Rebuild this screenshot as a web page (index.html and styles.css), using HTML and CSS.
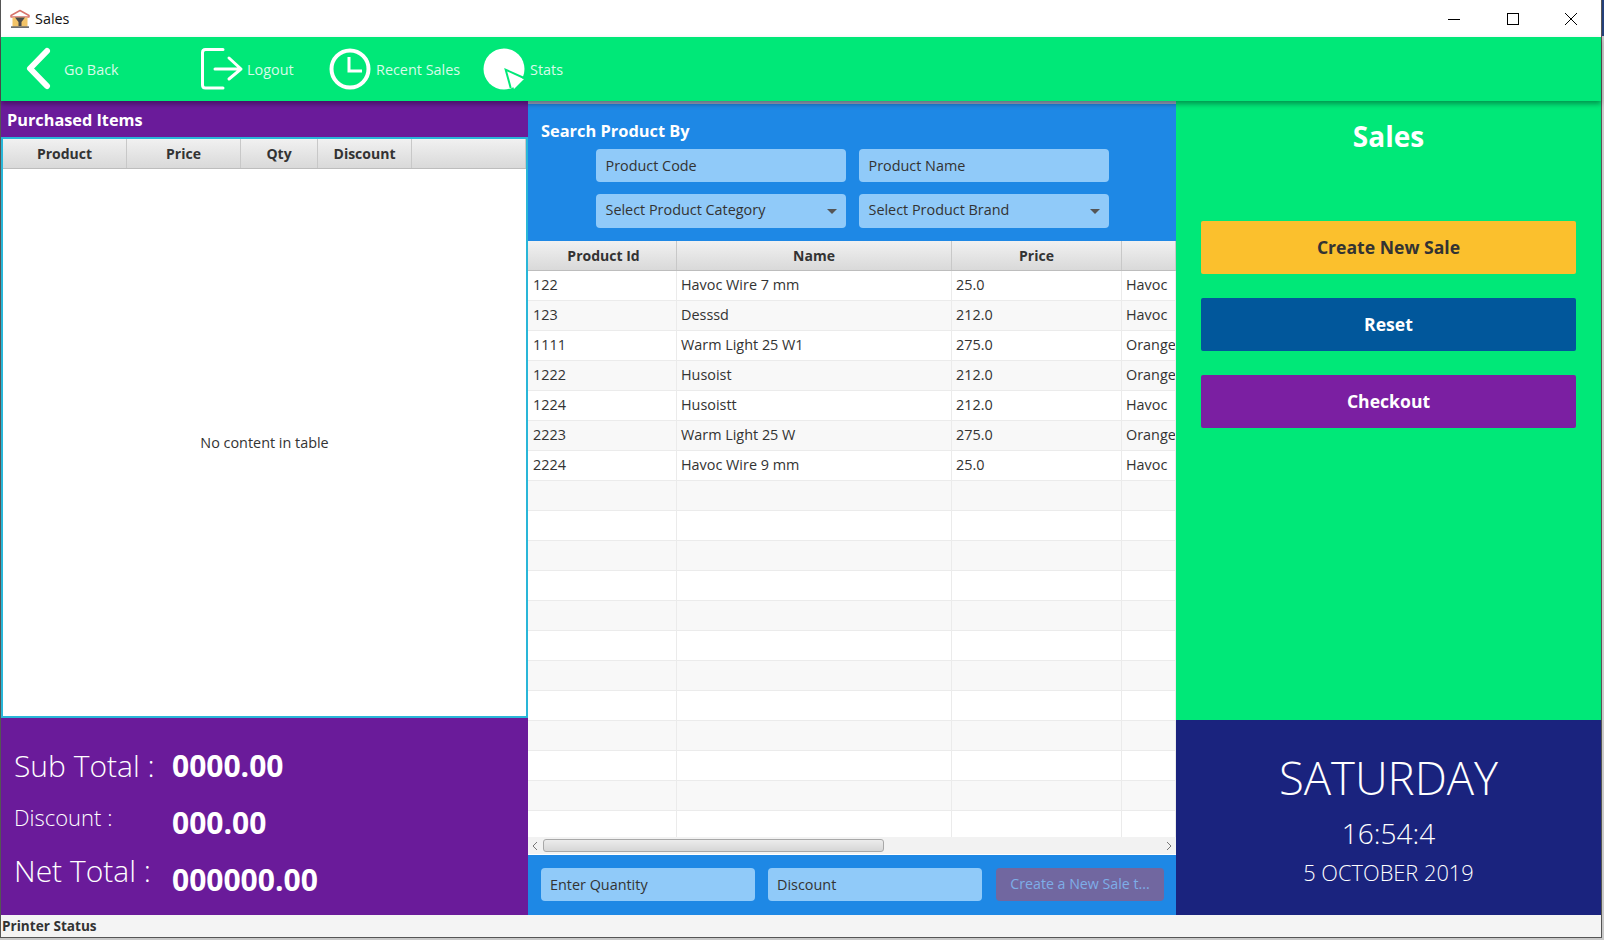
FILE: index.html
```html
<!DOCTYPE html>
<html lang="en-US">
<head>
    <meta charset="UTF-8">
    <meta name="viewport" content="width=device-width, initial-scale=1.0">
    <title>Sales</title>
    <link rel="stylesheet" href="styles.css">
</head>
<body>
    <div class="window">
        <div class="titlebar">
            <svg class="app-icon" width="20" height="20" viewBox="0 0 20 20">
                <path d="M1 6.5 L10 1.5 L19 6.5 V8 H1 Z" fill="#fff" stroke="#d8736c" stroke-width="1.5" stroke-linejoin="round"/>
                <rect x="2.5" y="8.5" width="15" height="9" fill="#f3c468"/>
                <path d="M5 8.5 H15 L11.5 13 V17 H8.5 V13 Z" fill="#4a4a4a"/>
                <rect x="1" y="17.5" width="18" height="1.2" fill="#333"/>
            </svg>
            <span class="title-text">Sales</span>
            <div class="win-controls">
                <svg width="14" height="14" viewBox="0 0 14 14"><path d="M1 7.5 H13" stroke="#000" fill="none"/></svg>
                <svg width="14" height="14" viewBox="0 0 14 14"><rect x="1.5" y="1.5" width="11" height="11" stroke="#000" fill="none"/></svg>
                <svg width="14" height="14" viewBox="0 0 14 14"><path d="M1 1 L13 13 M13 1 L1 13" stroke="#000" fill="none"/></svg>
            </div>
        </div>

        <div class="toolbar">
            <div class="tool tool-back">
                <svg width="30" height="44" viewBox="0 0 30 44"><path d="M25 4 L8 21.5 L25 39" stroke="#fff" stroke-width="6" stroke-linecap="round" stroke-linejoin="round" fill="none"/></svg>
                <span>Go Back</span>
            </div>
            <div class="tool tool-logout">
                <svg width="44" height="44" viewBox="0 0 44 44" fill="none" stroke="#fff" stroke-width="3" stroke-linecap="round" stroke-linejoin="round"><path d="M23 2.5 H5.5 Q2.5 2.5 2.5 5.5 V38 Q2.5 41 5.5 41 H23"/><path d="M15 22 H41 M29 11 L41 22 L29 32"/></svg>
                <span>Logout</span>
            </div>
            <div class="tool tool-recent">
                <svg width="42" height="42" viewBox="0 0 42 42" fill="none" stroke="#fff"><circle cx="21" cy="21" r="18.5" stroke-width="4"/><path d="M20 9 V23 H33" stroke-width="3"/></svg>
                <span>Recent Sales</span>
            </div>
            <div class="tool tool-stats">
                <svg width="42" height="42" viewBox="0 0 42 42">
                    <circle cx="21" cy="21" r="20.5" fill="#fff"/>
                    <path d="M25 25 L41 31 L31 41 Z" fill="#fff"/>
                    <path d="M41 30 L22.7 21.7 L27.7 40" stroke="#00e878" stroke-width="2" fill="none"/>
                </svg>
                <span>Stats</span>
            </div>
        </div>

        <div class="main">
            <div class="left-col">
                <div class="left-head">Purchased Items</div>
                <div class="cart-table">
                    <div class="table-head cart-cols">
                        <div>Product</div>
                        <div>Price</div>
                        <div>Qty</div>
                        <div>Discount</div>
                        <div></div>
                    </div>
                    <div class="cart-empty">No content in table</div>
                </div>
                <div class="totals">
                    <div class="total-row">
                        <span class="total-label big">Sub Total :</span>
                        <span class="total-value">0000.00</span>
                    </div>
                    <div class="total-row">
                        <span class="total-label small">Discount :</span>
                        <span class="total-value">000.00</span>
                    </div>
                    <div class="total-row">
                        <span class="total-label big net">Net Total :</span>
                        <span class="total-value">000000.00</span>
                    </div>
                </div>
            </div>

            <div class="mid-col">
                <div class="search-panel">
                    <div class="search-title">Search Product By</div>
                    <div class="search-grid">
                        <div class="field">Product Code</div>
                        <div class="field">Product Name</div>
                        <div class="field select">Select Product Category</div>
                        <div class="field select">Select Product Brand</div>
                    </div>
                </div>
                <div class="product-table">
                    <div class="table-head product-cols">
                        <div class="head-id">Product Id</div>
                        <div>Name</div>
                        <div>Price</div>
                        <div></div>
                    </div>
                    <div class="row product-cols"><div>122</div><div>Havoc Wire 7 mm</div><div>25.0</div><div>Havoc</div></div>
                    <div class="row product-cols"><div>123</div><div>Desssd</div><div>212.0</div><div>Havoc</div></div>
                    <div class="row product-cols"><div>1111</div><div>Warm Light 25 W1</div><div>275.0</div><div>Orange</div></div>
                    <div class="row product-cols"><div>1222</div><div>Husoist</div><div>212.0</div><div>Orange</div></div>
                    <div class="row product-cols"><div>1224</div><div>Husoistt</div><div>212.0</div><div>Havoc</div></div>
                    <div class="row product-cols"><div>2223</div><div>Warm Light 25 W</div><div>275.0</div><div>Orange</div></div>
                    <div class="row product-cols"><div>2224</div><div>Havoc Wire 9 mm</div><div>25.0</div><div>Havoc</div></div>
                    <div class="row product-cols"><div></div><div></div><div></div><div></div></div>
                    <div class="row product-cols"><div></div><div></div><div></div><div></div></div>
                    <div class="row product-cols"><div></div><div></div><div></div><div></div></div>
                    <div class="row product-cols"><div></div><div></div><div></div><div></div></div>
                    <div class="row product-cols"><div></div><div></div><div></div><div></div></div>
                    <div class="row product-cols"><div></div><div></div><div></div><div></div></div>
                    <div class="row product-cols"><div></div><div></div><div></div><div></div></div>
                    <div class="row product-cols"><div></div><div></div><div></div><div></div></div>
                    <div class="row product-cols"><div></div><div></div><div></div><div></div></div>
                    <div class="row product-cols"><div></div><div></div><div></div><div></div></div>
                    <div class="row product-cols"><div></div><div></div><div></div><div></div></div>
                    <div class="row row-last product-cols"><div></div><div></div><div></div><div></div></div>
                    <div class="hscroll">
                        <svg width="8" height="10" viewBox="0 0 8 10"><path d="M6 1 L2 5 L6 9" stroke="#777" fill="none"/></svg>
                        <div class="hscroll-track"><div class="hscroll-thumb"></div></div>
                        <svg width="8" height="10" viewBox="0 0 8 10"><path d="M2 1 L6 5 L2 9" stroke="#777" fill="none"/></svg>
                    </div>
                </div>
                <div class="qty-panel">
                    <div class="field qty-field">Enter Quantity</div>
                    <div class="field qty-field">Discount</div>
                    <div class="add-btn">Create a New Sale t...</div>
                </div>
            </div>

            <div class="right-col">
                <div class="actions">
                    <div class="sales-title">Sales</div>
                    <div class="btn btn-yellow">Create New Sale</div>
                    <div class="btn btn-blue">Reset</div>
                    <div class="btn btn-purple">Checkout</div>
                </div>
                <div class="clock">
                    <div class="clock-day">SATURDAY</div>
                    <div class="clock-time">16:54:4</div>
                    <div class="clock-date">5 OCTOBER 2019</div>
                </div>
            </div>
        </div>

        <div class="statusbar">Printer Status</div>
    </div>
</body>
</html>
```

FILE: styles.css
```css
* {
    padding: 0;
    margin: 0;
    box-sizing: border-box;
}
html, body {
    height: 100%;
    overflow: hidden;
}
body {
    font-family: "Open Sans", "Noto Sans", Arial, sans-serif;
    background: linear-gradient(#24407a 36px, #c9c9c9 36px);
    color: #333;
}
.window {
    width: 1602px;
    height: 938px;
    background-color: #f4f4f4;
    border-left: 1px solid #555;
    border-right: 1px solid #555;
    border-bottom: 1px solid #555;
    display: flex;
    flex-direction: column;
}
.titlebar {
    height: 37px;
    background-color: #fff;
    display: flex;
    align-items: center;
    padding-left: 9px;
    flex-shrink: 0;
}
.app-icon {
    margin-right: 5px;
}
.title-text {
    font-size: 14.4px;
    color: #111;
}
.win-controls {
    margin-left: auto;
    display: flex;
    gap: 44.5px;
    padding-right: 23px;
}
.toolbar {
    height: 64px;
    background-color: #00e878;
    box-shadow: 0 3px 5px rgba(0, 0, 0, 0.35);
    display: flex;
    align-items: center;
    position: relative;
    flex-shrink: 0;
    color: #fff;
    font-size: 14.4px;
}
.tool {
    display: flex;
    align-items: center;
}
.tool span {
    color: #d8fbe9;
}
.tool-back {
    width: 199px;
    padding-left: 21px;
    gap: 12px;
}
.tool-logout {
    width: 129px;
    gap: 3px;
}
.tool-recent {
    width: 154px;
    gap: 5px;
}
.tool-stats {
    gap: 5px;
}
.main {
    flex: 1;
    display: flex;
    min-height: 0;
}
.left-col {
    width: 527px;
    display: flex;
    flex-direction: column;
}
.left-head {
    height: 36px;
    background-color: #6a1b9a;
    color: #fff;
    font-size: 16.3px;
    font-weight: 700;
    padding-left: 6px;
    line-height: 38px;
    flex-shrink: 0;
}
.cart-table {
    flex: 1;
    background-color: #fff;
    border: 2px solid #29b6d8;
    display: flex;
    flex-direction: column;
}
.table-head {
    height: 30px;
    background: linear-gradient(#f1f1f1, #d9d9d9);
    border-bottom: 1px solid #bdbdbd;
    font-size: 14px;
    font-weight: 700;
    color: #333;
    flex-shrink: 0;
}
.table-head > div {
    display: flex;
    align-items: center;
    justify-content: center;
    border-right: 1px solid #c8c8c8;
}
.table-head > .head-id {
    padding-left: 3px;
}
.cart-cols {
    display: grid;
    grid-template-columns: 124px 114px 77px 94px 1fr;
}
.cart-empty {
    flex: 1;
    display: flex;
    align-items: center;
    justify-content: center;
    font-size: 14.4px;
    color: #333;
}
.totals {
    height: 197px;
    background-color: #6a1b9a;
    color: #fff;
    padding: 19px 0 0 13px;
    flex-shrink: 0;
}
.total-row {
    display: flex;
    align-items: center;
    height: 57px;
}
.total-label {
    width: 158px;
    font-weight: 300;
}
.total-label.big {
    font-size: 30px;
}
.total-label.small {
    font-size: 22px;
    margin-bottom: 12px;
}
.total-label.net {
    margin-bottom: 18px;
}
.total-value {
    font-size: 30px;
    font-weight: 700;
}
.mid-col {
    width: 648px;
    display: flex;
    flex-direction: column;
}
.search-panel {
    height: 140px;
    background-color: #1e88e5;
    border-top: 3px solid #9ba9c4;
    padding: 15px 0 0 13px;
    flex-shrink: 0;
}
.search-title {
    color: #fff;
    font-size: 16.4px;
    font-weight: 700;
    height: 30px;
}
.search-grid {
    display: grid;
    grid-template-columns: 250px 250px;
    column-gap: 13px;
    row-gap: 12px;
    margin-left: 55px;
}
.field {
    height: 33px;
    background-color: #90caf9;
    border-radius: 4px;
    font-size: 14.4px;
    color: #333;
    padding-left: 9px;
    display: flex;
    align-items: center;
}
.search-grid .field {
    padding-left: 9.5px;
}
.select {
    height: 34px;
    padding-bottom: 4px;
    position: relative;
}
.select::after {
    content: "";
    position: absolute;
    right: 9px;
    top: 15px;
    border-left: 5px solid transparent;
    border-right: 5px solid transparent;
    border-top: 5px solid #555;
}
.product-table {
    flex: 1;
    background-color: #fff;
    display: flex;
    flex-direction: column;
    min-height: 0;
}
.product-cols {
    display: grid;
    grid-template-columns: 149px 275px 170px 1fr;
}
.row {
    height: 30px;
    border-bottom: 1px solid #ebebeb;
    font-size: 14.4px;
    color: #333;
    flex-shrink: 0;
}
.row:nth-child(odd) {
    background-color: #f8f8f8;
}
.row > div {
    padding-left: 4px;
    border-right: 1px solid #ebebeb;
    line-height: 28px;
    white-space: nowrap;
    overflow: hidden;
}
.row > div:first-child {
    padding-left: 5px;
}
.row-last {
    height: 26px;
    border-bottom: none;
}
.hscroll {
    height: 17px;
    background-color: #f2f2f2;
    display: flex;
    align-items: center;
    padding: 0 3px;
    gap: 4px;
    flex-shrink: 0;
}
.hscroll-track {
    flex: 1;
}
.hscroll-thumb {
    width: 341px;
    height: 13px;
    background: linear-gradient(#ececec, #d6d6d6);
    border: 1px solid #a8a8a8;
    border-radius: 3px;
}
.qty-panel {
    height: 60px;
    background-color: #1e88e5;
    display: flex;
    align-items: center;
    padding: 0 0 2px 13px;
    gap: 13px;
    flex-shrink: 0;
}
.qty-field {
    width: 214px;
}
.add-btn {
    width: 168px;
    height: 33px;
    margin-left: 1px;
    background-color: #7167a0;
    color: #7eaee8;
    border-radius: 4px;
    font-size: 14.2px;
    padding-bottom: 2px;
    display: flex;
    align-items: center;
    justify-content: center;
}
.right-col {
    flex: 1;
    display: flex;
    flex-direction: column;
}
.actions {
    flex: 1;
    background-color: #00e878;
    padding: 0 25px;
}
.sales-title {
    color: #fff;
    font-size: 28px;
    font-weight: 700;
    text-align: center;
    height: 120px;
    padding-top: 16px;
}
.btn {
    height: 53px;
    margin-bottom: 24px;
    padding-bottom: 2px;
    border-radius: 2px;
    display: flex;
    align-items: center;
    justify-content: center;
    font-size: 17.6px;
    font-weight: 700;
    color: #fff;
}
.btn-yellow {
    background-color: #fbc02d;
    color: #333;
}
.btn-blue {
    background-color: #01579b;
}
.btn-purple {
    background-color: #7b1fa2;
}
.clock {
    height: 195px;
    background-color: #1a237e;
    color: #fff;
    text-align: center;
    padding-top: 26px;
}
.clock-day {
    font-size: 45.5px;
    font-weight: 300;
    line-height: 63px;
}
.clock-time {
    font-size: 28px;
    font-weight: 300;
    line-height: 48px;
}
.clock-date {
    font-size: 21.8px;
    font-weight: 300;
    line-height: 30px;
    margin-top: 1px;
}
.statusbar {
    height: 22px;
    background-color: #f4f4f4;
    font-size: 13.6px;
    font-weight: 700;
    line-height: 21px;
    padding-left: 1px;
    flex-shrink: 0;
}
```
